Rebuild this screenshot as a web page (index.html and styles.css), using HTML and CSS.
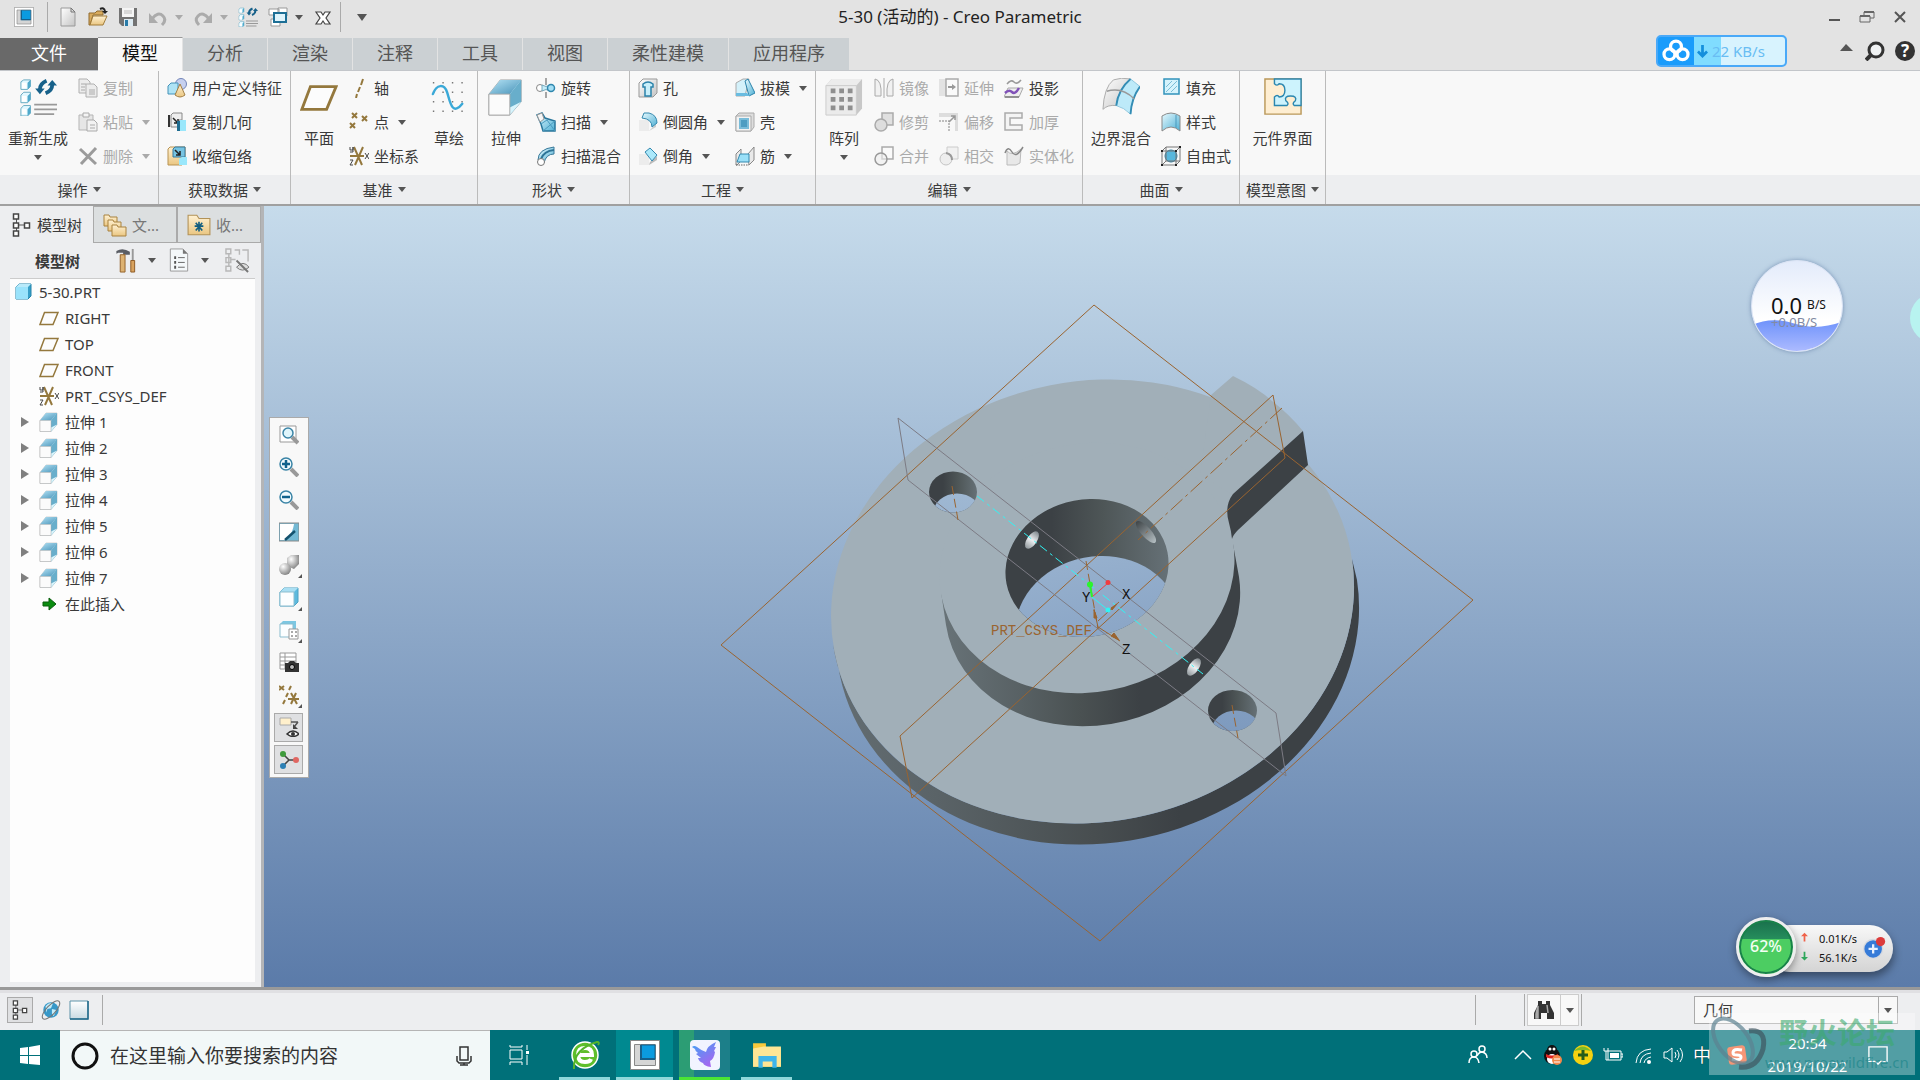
FILE: index.html
```html
<!DOCTYPE html>
<html lang="zh-CN">
<head>
    <meta charset="UTF-8">
    <meta name="viewport" content="width=device-width, initial-scale=1.0">
    <title>5-30 (活动的) - Creo Parametric</title>
    <link rel="stylesheet" href="styles.css">
</head>
<body>
    <!-- icon sprite -->
    <svg class="sprite" aria-hidden="true">
        <defs>
            <linearGradient id="g-blue" x1="0" y1="0" x2="1" y2="1"><stop offset="0" stop-color="#e8faff"/><stop offset="1" stop-color="#4fb0d4"/></linearGradient>
            <linearGradient id="g-deep" x1="0" y1="0" x2="1" y2="1"><stop offset="0" stop-color="#b5e3f5"/><stop offset="1" stop-color="#4792b8"/></linearGradient>
            <linearGradient id="g-grey" x1="0" y1="0" x2="1" y2="1"><stop offset="0" stop-color="#ffffff"/><stop offset="1" stop-color="#c4c4c4"/></linearGradient>
            <linearGradient id="g-page" x1="0" y1="0" x2="0" y2="1"><stop offset="0" stop-color="#ffffff"/><stop offset="1" stop-color="#c8dae2"/></linearGradient>
            <linearGradient id="g-tan" x1="0" y1="0" x2="0" y2="1"><stop offset="0" stop-color="#fff1d2"/><stop offset="1" stop-color="#eac681"/></linearGradient>
            <linearGradient id="g-bird" x1="0" y1="0" x2=".6" y2="1"><stop offset="0" stop-color="#3fa3f5"/><stop offset="1" stop-color="#a566f0"/></linearGradient>
            <radialGradient id="g-ball" cx=".35" cy=".3" r=".8"><stop offset="0" stop-color="#fff"/><stop offset="1" stop-color="#777"/></radialGradient>
        </defs>
        <symbol id="i-app" viewBox="0 0 30 30"><path d="M.5.5h29v29H.5z" fill="#fff" stroke="#888"/><path d="M4.500 4.500h21v21h-21z" fill="#d5d5d5" stroke="#888"/><path d="M11 5h14v14H11z" fill="#0b9be0" stroke="#15608c"/><path d="M11 5v14h14" fill="none" stroke="#15608c" stroke-width="2"/></symbol>
        <symbol id="i-new" viewBox="0 0 20 20"><path d="M3 1h10l4 4v14H3z" fill="url(#g-grey)" stroke="#999"/><path d="M13 1v4h4z" fill="#ddd" stroke="#777"/></symbol>
        <symbol id="i-open" viewBox="0 0 20 20"><path d="M1 6h6l2-2h6v4H5L2 18H1z" fill="#d8ab5e" stroke="#8f6b2f"/><path d="M5 9h14l-4 9H2z" fill="url(#g-tan)" stroke="#a27c39"/><path d="M12 2q4-2 5 2" fill="none" stroke="#222" stroke-width="2"/><path d="M14 4h6l-3 3z" fill="#222"/></symbol>
        <symbol id="i-save" viewBox="0 0 20 20"><path d="M1 1h18v18H4l-3-3z" fill="#737373"/><path d="M4 1h12v9H4z" fill="#f5f5f5"/><path d="M6 12h9v7H6z" fill="#ddeaf1"/><path d="M7 13h3v6H7z" fill="#297ba8"/><path d="M6 4h8M6 6h8" stroke="#bbb"/></symbol>
        <symbol id="i-undo" viewBox="0 0 20 20"><path d="M4 12q6-8 11-3 4 4-1 9" fill="none" stroke="#ababab" stroke-width="3"/><path d="M1 6v10h9z" fill="#ababab"/></symbol>
        <symbol id="i-redo" viewBox="0 0 20 20"><path d="M16 12q-6-8-11-3-4 4 1 9" fill="none" stroke="#ababab" stroke-width="3"/><path d="M19 6v10h-9z" fill="#ababab"/></symbol>
        <symbol id="i-regen" viewBox="0 0 40 40">
            <g fill="#e3f8ff" stroke="#66a9c0"><path d="M2 4l3-2h7v7l-3 3H2z"/><path d="M2 18l3-3h7v8l-3 3H2z"/><path d="M2 32l3-3h7v8l-3 3H2z"/></g>
            <g fill="#fff"><path d="M3 5h5v6H3zM3 19h5v6H3zM3 33h5v5H3z"/></g>
            <path d="M9 5l3-3v7l-3 3zM9 19l3-3v7l-3 3zM9 33l3-3v7l-3 3z" fill="#4fa9cb"/>
            <path d="M16 28h24M16 33h24M16 38h21" stroke="#999" stroke-width="2"/>
            <path d="M22 12q0-6 7-9" fill="none" stroke="#17618a" stroke-width="4"/><path d="M17 11h10l-5 6z" fill="#17618a"/><path d="M35 7q0 6-7 9" fill="none" stroke="#17618a" stroke-width="4"/><path d="M30 8h10l-5-6z" fill="#17618a"/>
        </symbol>
        <symbol id="i-wins" viewBox="0 0 20 20"><g fill="#fff" stroke="#999"><path d="M1 2h10v6H1zM10 1h9v8h-9zM3 12h9v7H3z"/></g><path d="M6 6h12v9H6z" fill="#dff4fc" stroke="#1d6f96" stroke-width="2"/></symbol>
        <symbol id="i-closewin" viewBox="0 0 20 20"><path d="M4 5h4l2 3 2-3h5l-4 6 4 6h-5l-2-3-2 3H3l4-6-4-6z" fill="#fff" stroke="#444" stroke-width="1.200"/></symbol>
        <symbol id="i-copy" viewBox="0 0 20 20"><g fill="#ececec" stroke="#b0b0b0"><path d="M1 1h8l3 3v11H1z"/><path d="M8 6h8l3 3v10H8z"/></g><path d="M3 6h5M3 9h4M3 12h4M11 12h6M11 14h6M11 16h6" stroke="#aaa"/></symbol>
        <symbol id="i-paste" viewBox="0 0 20 20"><path d="M1 3h14v15H1z" fill="#e6e6e6" stroke="#b5b5b5"/><path d="M5 1h6v4H5z" fill="#f4f4f4" stroke="#aaa"/><path d="M9 8h7l3 3v8H9z" fill="#f2f2f2" stroke="#aaa"/><path d="M12 13h5M12 16h5" stroke="#aaa"/></symbol>
        <symbol id="i-del" viewBox="0 0 20 20"><path d="M2 3l16 15M18 2L3 18" stroke="#9b9b9b" stroke-width="3"/></symbol>
        <symbol id="i-udf" viewBox="0 0 20 20"><circle cx="14" cy="6" r="5.500" fill="#c6d0ef" stroke="#7284b8"/><path d="M1 8l3-3h7v8l-3 3H1z" fill="#aee3f5" stroke="#4492b8"/><path d="M13 6l5 11q-5 4-10 0z" fill="url(#g-tan)" stroke="#a27f45"/></symbol>
        <symbol id="i-copygeom" viewBox="0 0 20 20"><path d="M1 3h2v12H1z" fill="#333"/><path d="M4 3l2-2h9v7h-3v7H4z" fill="#eee" stroke="#888"/><path d="M6 6l5 5m0-4v4H7" fill="none" stroke="#222" stroke-width="1.500"/><path d="M10 9h3v10h-3z" fill="#1e6c90"/><path d="M13 8h6v11h-6z" fill="#9ae7fb"/></symbol>
        <symbol id="i-shrink" viewBox="0 0 20 20"><path d="M1 3l2-2h15v13l-3 5H1z" fill="url(#g-tan)" stroke="#b89352"/><path d="M6 3l2-2h10v10H6z" fill="#76c4e2" stroke="#39799a"/><path d="M8 4l5 5m0-4v4H9" fill="none" stroke="#222" stroke-width="1.500"/><path d="M12 13l3-2h5v8h-8z" fill="#9ae7fb"/></symbol>
        <symbol id="i-plane" viewBox="0 0 40 40"><path d="M11 9h27L28 33H2z" fill="#fcfcfc" stroke="#94783d" stroke-width="3"/></symbol>
        <symbol id="i-axis" viewBox="0 0 20 20"><path d="M14 1l-2 6M11 9l-2 5M8 16l-1 4" stroke="#94783d" stroke-width="2"/></symbol>
        <symbol id="i-points" viewBox="0 0 20 20"><path d="M3 1l5 5m0-5L3 6M13 4l5 5m0-5l-5 5M1 11l5 5m0-5l-5 5" stroke="#94783d" stroke-width="2"/></symbol>
        <symbol id="i-csys" viewBox="0 0 20 20"><path d="M5 1l8 18M14 1L6 19M1 10h14" stroke="#94783d" stroke-width="2" fill="none"/><path d="M1 1v3h3V1v5H1M1 14h3l-3 5h3M16 7l4 6m0-6l-4 6" fill="none" stroke="#444"/></symbol>
        <symbol id="i-sketch" viewBox="0 0 40 40"><g stroke="#777" stroke-width="1.500" stroke-dasharray="1.500 8.500"><path d="M3 5h34M3 15h34M3 25h34M3 35h34"/></g><path d="M3 17C7 6 15 6 18 15s5 26 16 12" fill="none" stroke="#3aa9d8" stroke-width="2.500" stroke-linecap="round"/></symbol>
        <symbol id="i-extrude" viewBox="0 0 40 40"><path d="M2 17L14 2h22v23L24 39H2z" fill="#d8f4fc" stroke="#aaa"/><path d="M2 17L14 2h22L24 17z" fill="url(#g-deep)"/><path d="M24 17L36 2v23L24 39z" fill="#68aecb"/><path d="M24 31l12-6-12 14z" fill="#d8f4fc"/><path d="M2 17h22v22H2z" fill="#fbfbfb" stroke="#aaa"/></symbol>
        <symbol id="i-revolve" viewBox="0 0 20 20"><circle cx="4" cy="10" r="3.500" fill="#fff" stroke="#888"/><path d="M6 7q4 3 8 0v6q-4-3-8 0z" fill="#c6edf9" stroke="#77a9bc"/><circle cx="15" cy="10" r="3.500" fill="#a4dff5" stroke="#2f87ae" stroke-width="1.500"/><path d="M10 0v7m0 7v6" stroke="#555"/></symbol>
        <symbol id="i-sweep" viewBox="0 0 20 20"><path d="M1 3l5-2 3 5 10 3v10H7L5 12z" fill="url(#g-blue)" stroke="#29769b" stroke-width="1.500"/><path d="M5 12l6-4 8 11M7 19l12-10" stroke="#4a9bbf" fill="none"/><path d="M1 3l5-2 2 6-4 3z" fill="#f6f6f6" stroke="#999"/></symbol>
        <symbol id="i-sweptblend" viewBox="0 0 20 20"><path d="M2 14Q2 3 18 1v7q-8 0-10 9z" fill="url(#g-blue)" stroke="#39799a"/><path d="M5 13Q8 5 18 4" stroke="#2c7396" fill="none" stroke-width="2"/><circle cx="5" cy="16" r="3.500" fill="#fff" stroke="#777"/></symbol>
        <symbol id="i-hole" viewBox="0 0 20 20"><path d="M1 5l4-4h14v14l-4 4H1z" fill="url(#g-grey)" stroke="#999"/><path d="M5 6q5-4 10 0v3h-2v9H7V9H5z" fill="#c9effa" stroke="#2b83ab" stroke-width="1.500"/></symbol>
        <symbol id="i-round" viewBox="0 0 20 20"><path d="M1 8h10v11H1z" fill="#ececec"/><path d="M11 19l7-4v-3" fill="#ccc"/><path d="M6 1h5q8 2 8 10l-5 4Q14 7 4 6z" fill="url(#g-blue)" stroke="#3589af"/></symbol>
        <symbol id="i-chamfer" viewBox="0 0 20 20"><path d="M1 8h10v11H1z" fill="#ececec"/><path d="M11 19l8-5v-4l-7 6z" fill="#bbb"/><path d="M7 6l5-4 7 7-5 6z" fill="#abe8fa" stroke="#3589af"/></symbol>
        <symbol id="i-draft" viewBox="0 0 20 20"><path d="M1 5l7-4h6l-4 17H1z" fill="#d4f1fa" stroke="#aaa"/><path d="M10 3l3-2 7 14-6 3z" fill="url(#g-blue)" stroke="#2b83ab"/><path d="M1 15h11l3 3H1z" fill="#6abce0"/></symbol>
        <symbol id="i-shell" viewBox="0 0 20 20"><path d="M1 4l3-3h15v14l-3 4H1z" fill="#ddd" stroke="#aaa"/><path d="M1 4h15v15H1z" fill="#f2f2f2" stroke="#aaa"/><path d="M5 7h8v9H5z" fill="#4d9dc2" stroke="#79bcd9" stroke-width="2"/></symbol>
        <symbol id="i-rib" viewBox="0 0 20 20"><path d="M1 8l5-5v12l-4 4H1zM13 8l6-7v13l-5 5z" fill="#e9e9e9" stroke="#888"/><path d="M5 8h9v8H2z" fill="#9ae0f8" stroke="#3589af"/><path d="M1 19h13" stroke="#666" stroke-dasharray="1.500 1"/></symbol>
        <symbol id="i-pattern" viewBox="0 0 40 40"><path d="M1 8l6-7h32v31l-6 7H1z" fill="#c8c8c8"/><path d="M1 8l6-7h32l-6 7z" fill="#ececec"/><path d="M1 8h32v31H1z" fill="#ebebeb" stroke="#ccc"/><g fill="#8f8f8f"><path d="M6 11h5v5H6zM15 11h5v5h-5zM24 11h5v5h-5zM6 20h5v5H6zM15 20h5v5h-5zM24 20h5v5h-5zM6 29h5v5H6zM15 29h5v5h-5zM24 29h5v5h-5z"/></g></symbol>
        <symbol id="i-mirror" viewBox="0 0 20 20"><path d="M1 1q7 1 6 17H1zM19 1q-7 1-6 17h6z" fill="#f1f1f1" stroke="#aaa"/><path d="M10 0v20" stroke="#aaa"/></symbol>
        <symbol id="i-trim" viewBox="0 0 20 20"><path d="M8 1h11v12H8z" fill="#e0e0e0" stroke="#aaa" stroke-width="1.500"/><circle cx="7" cy="13" r="6" fill="#ddd" stroke="#aaa" stroke-width="1.500"/></symbol>
        <symbol id="i-merge" viewBox="0 0 20 20"><path d="M8 1h11v12H8z" fill="#fafafa" stroke="#aaa" stroke-width="1.500"/><circle cx="7" cy="13" r="6" fill="#eee" fill-opacity=".6" stroke="#999" stroke-width="1.500"/></symbol>
        <symbol id="i-extend" viewBox="0 0 20 20"><path d="M0 1h7v17H0z" fill="#e3e3e3"/><path d="M7 1h12v17H7z" fill="#fafafa" stroke="#aaa" stroke-width="1.500"/><path d="M9 9h5" stroke="#999" stroke-width="2"/><path d="M13 6l4 3-4 3z" fill="#999"/></symbol>
        <symbol id="i-offset" viewBox="0 0 20 20"><path d="M0 1h19v18h-3V5H0z" fill="#ddd"/><path d="M0 9h10v10" fill="none" stroke="#aaa" stroke-dasharray="2 1" stroke-width="1.500"/><path d="M10 10l6-6m-4 0h4v4" fill="none" stroke="#999" stroke-width="1.500"/></symbol>
        <symbol id="i-intersect" viewBox="0 0 20 20"><path d="M8 1h11v12H8z" fill="#f1f1f1" stroke="#ccc"/><circle cx="7" cy="13" r="6" fill="#eee" stroke="#c4c4c4"/><path d="M7 7q6 1 6 7" fill="none" stroke="#999" stroke-width="2"/></symbol>
        <symbol id="i-project" viewBox="0 0 20 20"><path d="M3 6q4-5 7-2t7-2" fill="none" stroke="#999" stroke-width="1.500"/><path d="M4 10h15l-4 9H0z" fill="#eee" stroke="#aaa"/><path d="M1 15q4-4 7-1t7-4" fill="none" stroke="#8152b8" stroke-width="2.500"/><path d="M1 19h14" stroke="#555"/></symbol>
        <symbol id="i-thicken" viewBox="0 0 20 20"><path d="M1 1h17v5H6v7h12v5H1z" fill="#f4f4f4" stroke="#aaa" stroke-width="1.500"/></symbol>
        <symbol id="i-solidify" viewBox="0 0 20 20"><path d="M3 5q5 6 14-2l-1 14-4 2H3z" fill="#e8e8e8" stroke="#bbb"/><path d="M1 7q3-8 7-1t11-5" fill="none" stroke="#888" stroke-width="1.500"/></symbol>
        <symbol id="i-boundary" viewBox="0 0 40 40"><path d="M1 33Q2 10 12 2q8-3 18-1Q17 12 15 29 6 28 1 33z" fill="url(#g-grey)" stroke="#aaa"/><path d="M30 1l10 8q-9 12-10 29-7-7-15-9Q17 12 30 1z" fill="#bdeaf9" stroke="#8cc6de"/><path d="M30 1Q17 12 15 29M40 9q-9 12-10 29" stroke="#348db5" stroke-width="2" fill="none"/><path d="M5 14q16-5 29 8" stroke="#999" stroke-width="1.500" fill="none"/></symbol>
        <symbol id="i-fill" viewBox="0 0 20 20"><path d="M3 1h15v15H3z" fill="#d5f3fc" stroke="#3193bb" stroke-width="1.500"/><path d="M5 9l6-6M5 14L16 3M10 14l6-6" stroke="#7abdd6"/></symbol>
        <symbol id="i-style" viewBox="0 0 20 20"><path d="M1 4q9-6 18 0v15q-9-8-18 0z" fill="url(#g-blue)" stroke="#8a8a8a"/><path d="M15 3v13" stroke="#4b99bd"/></symbol>
        <symbol id="i-freestyle" viewBox="0 0 20 20"><circle cx="10" cy="10" r="6" fill="#58b7dc" stroke="#2d7da1"/><path d="M1 5h14v14H1zM1 5l4-4h14v14l-4 4M15 5l4-4M5 1v14L1 19M5 15h14" fill="none" stroke="#777"/><path d="M0 4h2v2H0zM14 4h2v2h-2zM18 0h2v2h-2zM0 18h2v2H0zM14 18h2v2h-2z" fill="#222"/></symbol>
        <symbol id="i-puzzle" viewBox="0 0 40 40"><path d="M1 1h38v37H1z" fill="#feeed2" stroke="#b99758" stroke-width="1.500"/><path d="M11 1h28v28h-7q-3-2 1-5 2-5-5-5t-5 5q4 3 1 5H11v-9q3-3 5 0 6 0 6-7t-6-7q-2 3-5 0z" fill="#cdf3fd" stroke="#2b87b0" stroke-width="1.500"/></symbol>
        <symbol id="i-tree" viewBox="0 0 20 24"><path d="M5 6v12M7 12h7" stroke="#555"/><g fill="#fff" stroke="#444" stroke-width="1.500"><path d="M2 1h5v5H2zM2 10h5v5H2zM2 18h5v5H2zM13 10h5v5h-5z"/></g></symbol>
        <symbol id="i-folders" viewBox="0 0 24 24"><g fill="url(#g-tan)" stroke="#a8823f"><path d="M1 2h5l1 2h7v9H1z"/><path d="M5 7h5l1 2h7v9H5z"/><path d="M9 12h5l1 2h8v9H9z"/></g></symbol>
        <symbol id="i-fav" viewBox="0 0 22 20"><path d="M1 4V1h8l2 3h10v15H1z" fill="url(#g-tan)" stroke="#b29257"/><path d="M11 7v9M7 11h8M8 8l6 7m0-7l-6 7" stroke="#125e80" stroke-width="1.500"/></symbol>
        <symbol id="i-hammer" viewBox="0 0 22 26"><path d="M1 6V3q7-4 14 1v3H8V5H3z" fill="#5a5d64"/><path d="M5 7h5v18H5z" fill="#ddb272" stroke="#93622a"/><path d="M18 1v12" stroke="#999" stroke-width="2"/><path d="M16 13h4v12h-4z" fill="#d8a25e" stroke="#8d5a23"/></symbol>
        <symbol id="i-list" viewBox="0 0 20 26"><path d="M1 1h13l5 5v18H1z" fill="#f4f8fa" stroke="#999"/><path d="M14 1v5h5z" fill="#777"/><path d="M5 10h2M5 15h2M5 20h2" stroke="#555" stroke-width="3"/><path d="M9 10h7M9 15h7M9 20h7" stroke="#666"/></symbol>
        <symbol id="i-hide" viewBox="0 0 26 26"><g fill="none" stroke="#b8b8b8"><path d="M1 1h5v5H1zM1 10h5v5H1zM1 19h5v5H1zM4 6v13M6 12h5M10 2h5v5M18 2h6v12" stroke-width="1.500"/></g><path d="M12 20q7-8 13 0-7 6-13 0z" fill="#ddd" stroke="#777"/><path d="M12 13l12 12" stroke="#777" stroke-width="2"/></symbol>
        <symbol id="i-part" viewBox="0 0 18 18"><path d="M1 4l3-3h12v12l-3 3H1z" fill="#379fc7" stroke="#2484aa"/><path d="M1 4l3-3h12l-3 3z" fill="#b9eafa"/><path d="M1 4h12v12H1z" fill="#9ae3fb"/></symbol>
        <symbol id="i-insert" viewBox="0 0 20 20"><path d="M4 8h6V4l7 6-7 6v-4H4z" fill="#0b8c10" stroke="#0a5c0d"/></symbol>
        <symbol id="i-refit" viewBox="0 0 20 20"><path d="M1 1h16v16H1z" fill="#fff" stroke="#999"/><path d="M13 12l6 6" stroke="#999" stroke-width="4"/><circle cx="9" cy="8" r="5" fill="#dff5fb" stroke="#3a84a6" stroke-width="1.500"/></symbol>
        <symbol id="i-zoomin" viewBox="0 0 20 20"><path d="M12 12l7 7" stroke="#999" stroke-width="4"/><circle cx="7" cy="7" r="6" fill="#f2fbfe" stroke="#3a84a6" stroke-width="1.500"/><path d="M7 3v8M3 7h8" stroke="#11628c" stroke-width="2.500"/></symbol>
        <symbol id="i-zoomout" viewBox="0 0 20 20"><path d="M12 12l7 7" stroke="#999" stroke-width="4"/><circle cx="7" cy="7" r="6" fill="#f2fbfe" stroke="#3a84a6" stroke-width="1.500"/><path d="M3 7h8" stroke="#11628c" stroke-width="2.500"/></symbol>
        <symbol id="i-repaint" viewBox="0 0 20 20"><path d="M0 1h20v18H0z" fill="#73b9d4" stroke="#888"/><path d="M1 2h14q-1 9-8 16H1z" fill="#fff"/><path d="M6 18l10-9" stroke="#14526e" stroke-width="2.500"/></symbol>
        <symbol id="i-render" viewBox="0 0 20 20"><path d="M8 3l4-3h8v9l-5 5-7-3z" fill="url(#g-ball)"/><circle cx="6" cy="14" r="6" fill="url(#g-ball)"/></symbol>
        <symbol id="i-cube" viewBox="0 0 20 20"><path d="M1 5l4-4h14v14l-4 4H1z" fill="#5dbade" stroke="#4fa2c3"/><path d="M1 5l4-4h14l-4 4z" fill="#aadff3"/><path d="M1 5h14v14H1z" fill="#fcfeff" stroke="#8bbdcf"/></symbol>
        <symbol id="i-cubelist" viewBox="0 0 20 20"><path d="M1 4l3-3h13v13l-3 3H1z" fill="#7dc7e2"/><path d="M1 4h13v13H1z" fill="#fcfeff" stroke="#8bbdcf"/><path d="M10 9h9v10h-9z" fill="#fff" stroke="#999"/><path d="M12 12h2m2 0h2m-6 4h2m2 0h2" stroke="#555"/></symbol>
        <symbol id="i-camera" viewBox="0 0 20 20"><path d="M1 1h16v16H1zM1 5h16M6 1v16M1 9h16M1 13h16" fill="#fff" stroke="#999"/><path d="M6 11h3l2-2h4l2 2h3v9H6z" fill="#333"/><circle cx="13" cy="15" r="2.500" fill="#bbb" stroke="#000"/></symbol>
        <symbol id="i-datum" viewBox="0 0 20 20"><path d="M0 1l5 4m0-4L0 5M12 1l-2 4M9 8l-2 4M6 15l-2 4M12 8l6 11m-1-11l-5 11M9 14h11" stroke="#94783d" stroke-width="2"/></symbol>
        <symbol id="i-annot" viewBox="0 0 20 20"><path d="M1 1h11v7H1z" fill="#fff0cc" stroke="#aaa"/><path d="M12 5h7M19 5l-4 5" fill="none" stroke="#555" stroke-width="1.500"/><path d="M14 7v5h5z" fill="#444"/><path d="M8 17q6-6 12 0-6 5-12 0z" fill="#fff" stroke="#333" stroke-width="1.500"/><circle cx="14" cy="17" r="2" fill="#333"/></symbol>
        <symbol id="i-spin" viewBox="0 0 20 20"><path d="M4 4l6 6-6 6M10 10h7" fill="none" stroke="#444" stroke-width="1.500"/><circle cx="4" cy="4" r="3" fill="#3f9b3d"/><circle cx="17" cy="10" r="3" fill="#e06762"/><circle cx="4" cy="16" r="3" fill="#2c80b5"/></symbol>
        <symbol id="i-globe" viewBox="0 0 22 22"><circle cx="11" cy="11" r="8.500" fill="#3898c8"/><path d="M5 7q4-5 8-3l-2 5-4 1-1 4zM12 10l5 1-3 7-2-3z" fill="#c5ecf8"/><ellipse cx="11" cy="11" rx="13" ry="5" transform="rotate(-47 11 11)" fill="none" stroke="#777" stroke-width="1.200"/></symbol>
        <symbol id="i-page" viewBox="0 0 20 20"><path d="M1 1h18v18H1z" fill="url(#g-page)" stroke="#5d93a9"/><path d="M19 1v18H1" fill="none" stroke="#1f6a8b" stroke-width="1.500"/></symbol>
        <symbol id="i-binoc" viewBox="0 0 20 20"><path d="M4 1h4v3h4V1h4v4l4 8v6h-7v-6H7v6H0v-6l4-8z" fill="#333"/><path d="M4 6l-2 8v4h2zM13 5l1 8" stroke="#aaa" fill="#aaa" stroke-width="1.500"/></symbol>
    </svg>

    <header class="titlebar">
        <div class="quick-access">
            <button class="qa qa-app" aria-label="Creo"><svg><use href="#i-app"/></svg></button>
            <button class="qa" aria-label="新建"><svg><use href="#i-new"/></svg></button>
            <button class="qa" aria-label="打开"><svg><use href="#i-open"/></svg></button>
            <button class="qa" aria-label="保存"><svg><use href="#i-save"/></svg></button>
            <button class="qa off" aria-label="撤消"><svg><use href="#i-undo"/></svg><i class="arrow"></i></button>
            <button class="qa off" aria-label="重做"><svg><use href="#i-redo"/></svg><i class="arrow"></i></button>
            <button class="qa" aria-label="重新生成"><svg><use href="#i-regen"/></svg></button>
            <button class="qa" aria-label="窗口"><svg><use href="#i-wins"/></svg><i class="arrow"></i></button>
            <button class="qa" aria-label="关闭"><svg><use href="#i-closewin"/></svg></button>
            <button class="qa qa-more" aria-label="自定义"><i class="arrow"></i></button>
        </div>
        <h1>5-30 (活动的) - Creo Parametric</h1>
        <div class="window-controls">
            <button aria-label="最小化"><svg viewBox="0 0 16 16"><path d="M3 11h11" stroke="#555" stroke-width="2"/></svg></button>
            <button aria-label="还原"><svg viewBox="0 0 16 16"><path d="M5 6V3h10v6h-4M1 7h10v6H1z" fill="none" stroke="#666"/><path d="M5 3h10M1 7h10" stroke="#666" stroke-width="2"/></svg></button>
            <button aria-label="关闭窗口"><svg viewBox="0 0 16 16"><path d="M3 3l10 10M13 3L3 13" stroke="#555" stroke-width="2"/></svg></button>
        </div>
    </header>

    <nav class="tabs">
        <button class="tab file">文件</button>
        <button class="tab active">模型</button>
        <button class="tab">分析</button>
        <button class="tab">渲染</button>
        <button class="tab">注释</button>
        <button class="tab">工具</button>
        <button class="tab">视图</button>
        <button class="tab long">柔性建模</button>
        <button class="tab long">应用程序</button>
        <div class="help">
            <button aria-label="折叠"><svg viewBox="0 0 20 20"><path d="M5 10l6-7 7 7z" fill="#555"/></svg></button>
            <button aria-label="搜索"><svg viewBox="0 0 20 20"><path d="M1 19l6-6" stroke="#333" stroke-width="4"/><circle cx="11" cy="9" r="7" fill="#f0f2f3" stroke="#333" stroke-width="3"/></svg></button>
            <button class="q" aria-label="帮助">?</button>
        </div>
    </nav>

    <section class="ribbon">
        <div class="group">
            <div class="tools">
                <button class="big wide"><svg><use href="#i-regen"/></svg>重新生成<i class="arrow"></i></button>
                <div class="rows">
                    <button class="off"><svg><use href="#i-copy"/></svg>复制</button>
                    <button class="off"><svg><use href="#i-paste"/></svg>粘贴<i class="arrow"></i></button>
                    <button class="off"><svg><use href="#i-del"/></svg>删除<i class="arrow"></i></button>
                </div>
            </div>
            <button class="caption">操作<i class="arrow"></i></button>
        </div>
        <div class="group">
            <div class="tools">
                <div class="rows first">
                    <button><svg><use href="#i-udf"/></svg>用户定义特征</button>
                    <button><svg><use href="#i-copygeom"/></svg>复制几何</button>
                    <button><svg><use href="#i-shrink"/></svg>收缩包络</button>
                </div>
            </div>
            <button class="caption">获取数据<i class="arrow"></i></button>
        </div>
        <div class="group">
            <div class="tools">
                <button class="big"><svg><use href="#i-plane"/></svg>平面</button>
                <div class="rows">
                    <button><svg><use href="#i-axis"/></svg>轴</button>
                    <button><svg><use href="#i-points"/></svg>点<i class="arrow"></i></button>
                    <button><svg><use href="#i-csys"/></svg>坐标系</button>
                </div>
                <button class="big last"><svg><use href="#i-sketch"/></svg>草绘</button>
            </div>
            <button class="caption">基准<i class="arrow"></i></button>
        </div>
        <div class="group">
            <div class="tools">
                <button class="big"><svg><use href="#i-extrude"/></svg>拉伸</button>
                <div class="rows">
                    <button><svg><use href="#i-revolve"/></svg>旋转</button>
                    <button><svg><use href="#i-sweep"/></svg>扫描<i class="arrow"></i></button>
                    <button><svg><use href="#i-sweptblend"/></svg>扫描混合</button>
                </div>
            </div>
            <button class="caption">形状<i class="arrow"></i></button>
        </div>
        <div class="group">
            <div class="tools">
                <div class="rows first half">
                    <button><svg><use href="#i-hole"/></svg>孔</button>
                    <button><svg><use href="#i-round"/></svg>倒圆角<i class="arrow"></i></button>
                    <button><svg><use href="#i-chamfer"/></svg>倒角<i class="arrow"></i></button>
                </div>
                <div class="rows">
                    <button><svg><use href="#i-draft"/></svg>拔模<i class="arrow"></i></button>
                    <button><svg><use href="#i-shell"/></svg>壳</button>
                    <button><svg><use href="#i-rib"/></svg>筋<i class="arrow"></i></button>
                </div>
            </div>
            <button class="caption">工程<i class="arrow"></i></button>
        </div>
        <div class="group">
            <div class="tools">
                <button class="big"><svg><use href="#i-pattern"/></svg>阵列<i class="arrow"></i></button>
                <div class="rows even">
                    <button class="off"><svg><use href="#i-mirror"/></svg>镜像</button>
                    <button class="off"><svg><use href="#i-trim"/></svg>修剪</button>
                    <button class="off"><svg><use href="#i-merge"/></svg>合并</button>
                </div>
                <div class="rows even">
                    <button class="off"><svg><use href="#i-extend"/></svg>延伸</button>
                    <button class="off"><svg><use href="#i-offset"/></svg>偏移</button>
                    <button class="off"><svg><use href="#i-intersect"/></svg>相交</button>
                </div>
                <div class="rows">
                    <button><svg><use href="#i-project"/></svg>投影</button>
                    <button class="off"><svg><use href="#i-thicken"/></svg>加厚</button>
                    <button class="off"><svg><use href="#i-solidify"/></svg>实体化</button>
                </div>
            </div>
            <button class="caption">编辑<i class="arrow"></i></button>
        </div>
        <div class="group">
            <div class="tools">
                <button class="big wide"><svg><use href="#i-boundary"/></svg>边界混合</button>
                <div class="rows">
                    <button><svg><use href="#i-fill"/></svg>填充</button>
                    <button><svg><use href="#i-style"/></svg>样式</button>
                    <button><svg><use href="#i-freestyle"/></svg>自由式</button>
                </div>
            </div>
            <button class="caption">曲面<i class="arrow"></i></button>
        </div>
        <div class="group">
            <div class="tools">
                <button class="big full"><svg><use href="#i-puzzle"/></svg>元件界面</button>
            </div>
            <button class="caption">模型意图<i class="arrow"></i></button>
        </div>
        <div class="group rest">
            <div class="tools"></div>
            <div class="caption"></div>
        </div>
    </section>

    <main class="workspace">
        <aside class="navigator">
            <div class="nav-tabs">
                <button class="active"><svg class="i-tree"><use href="#i-tree"/></svg>模型树</button>
                <button><svg><use href="#i-folders"/></svg>文...</button>
                <button><svg><use href="#i-fav"/></svg>收...</button>
            </div>
            <div class="nav-tools">
                <h2>模型树</h2>
                <button aria-label="设置"><svg><use href="#i-hammer"/></svg><i class="arrow"></i></button>
                <button aria-label="显示"><svg><use href="#i-list"/></svg><i class="arrow"></i></button>
                <button class="hide" aria-label="隐藏"><svg><use href="#i-hide"/></svg></button>
            </div>
            <ul class="tree">
                <li class="root"><svg><use href="#i-part"/></svg>5-30.PRT</li>
                <li><svg><use href="#i-plane"/></svg>RIGHT</li>
                <li><svg><use href="#i-plane"/></svg>TOP</li>
                <li><svg><use href="#i-plane"/></svg>FRONT</li>
                <li><svg><use href="#i-csys"/></svg>PRT_CSYS_DEF</li>
                <li class="node"><svg><use href="#i-extrude"/></svg>拉伸 1</li>
                <li class="node"><svg><use href="#i-extrude"/></svg>拉伸 2</li>
                <li class="node"><svg><use href="#i-extrude"/></svg>拉伸 3</li>
                <li class="node"><svg><use href="#i-extrude"/></svg>拉伸 4</li>
                <li class="node"><svg><use href="#i-extrude"/></svg>拉伸 5</li>
                <li class="node"><svg><use href="#i-extrude"/></svg>拉伸 6</li>
                <li class="node"><svg><use href="#i-extrude"/></svg>拉伸 7</li>
                <li><svg><use href="#i-insert"/></svg>在此插入</li>
            </ul>
        </aside>

        <section class="canvas">
            <svg class="model" viewBox="264 206 1656 781">
                <defs>
                    <linearGradient id="m-bg" gradientUnits="userSpaceOnUse" x1="0" y1="206" x2="0" y2="987"><stop offset="0" stop-color="#c6dbeb"/><stop offset="1" stop-color="#5b7ba9"/></linearGradient>
                    <linearGradient id="m-rim" gradientUnits="userSpaceOnUse" x1="833" y1="0" x2="1180" y2="0"><stop offset="0" stop-color="#636d72"/><stop offset=".3" stop-color="#5a6367"/><stop offset=".75" stop-color="#484e50"/><stop offset="1" stop-color="#3c4145"/></linearGradient>
                    <linearGradient id="m-boss" gradientUnits="userSpaceOnUse" x1="941" y1="0" x2="1140" y2="0"><stop offset="0" stop-color="#687378"/><stop offset=".4" stop-color="#586164"/><stop offset=".7" stop-color="#4a5152"/><stop offset="1" stop-color="#3c4145"/></linearGradient>
                    <linearGradient id="m-bore"><stop offset=".3" stop-color="#3c4145"/><stop offset=".6" stop-color="#4e5657"/><stop offset="1" stop-color="#677278"/></linearGradient>
                    <linearGradient id="m-pin" x1="0" y1="0" x2="0" y2="1"><stop offset="0" stop-color="#7d858a"/><stop offset=".5" stop-color="#eef0f2"/><stop offset="1" stop-color="#8f979b"/></linearGradient>
                    <linearGradient id="m-pin-dark" x1="0" y1="0" x2="0" y2="1"><stop offset="0" stop-color="#3f4548"/><stop offset="1" stop-color="#b3bdc1"/></linearGradient>
                    <clipPath id="c-bore"><ellipse cx="1087" cy="568" rx="82" ry="68.500" transform="rotate(-11 1087 568)"/></clipPath>
                    <clipPath id="c-left"><ellipse cx="953" cy="492" rx="24" ry="20.500"/></clipPath>
                    <clipPath id="c-right"><ellipse cx="1232.500" cy="710.500" rx="24.500" ry="20.500"/></clipPath>
                </defs>

                <!-- base disc -->
                <path d="M833 644A262.900 220.300 -11 0 0 1352 559l5 21A262.900 220.300 -11 0 1 838 665z" fill="url(#m-rim)"/>
                <ellipse cx="1092.500" cy="601.500" rx="262.900" ry="220.300" transform="rotate(-11 1092.500 601.500)" fill="#a1afb8"/>

                <!-- boss and lever arm -->
                <path d="M941 592A148.300 124.300 -11 0 0 1233 544l6 33A148.300 124.300 -11 0 1 946 625z" fill="url(#m-boss)"/>
                <ellipse cx="1087" cy="568" rx="148.300" ry="124.300" transform="rotate(-11 1087 568)" fill="#a1afb8"/>
                <path d="M1211 395l22-19q25 12 39 25 17 13 31 30l-70 64-33-20z" fill="#a1afb8"/>
                <path d="M1303 431l5 34-70 65q-5 5-6 9-1-9-3-16-5-17 4-29z" fill="#3c4145"/>

                <!-- bores -->
                <g clip-path="url(#c-bore)">
                    <path d="M1000 490h172v160h-172z" fill="url(#m-bore)"/>
                    <ellipse cx="1097" cy="625" rx="82" ry="68.500" transform="rotate(-11 1097 625)" fill="url(#m-bg)"/>
                </g>
                <g clip-path="url(#c-left)">
                    <path d="M928 470h50v45h-50z" fill="url(#m-bore)"/>
                    <ellipse cx="957" cy="514" rx="24" ry="20.500" fill="url(#m-bg)"/>
                </g>
                <g clip-path="url(#c-right)">
                    <path d="M1207 688h51v45h-51z" fill="url(#m-bore)"/>
                    <ellipse cx="1236" cy="731" rx="24.500" ry="20.500" fill="url(#m-bg)"/>
                </g>
                <ellipse cx="1032" cy="540" rx="5" ry="10" transform="rotate(34 1032 540)" fill="url(#m-pin)"/>
                <ellipse cx="1194" cy="667" rx="5" ry="10" transform="rotate(34 1194 667)" fill="url(#m-pin)"/>
                <ellipse cx="1146" cy="532" rx="5" ry="14" transform="rotate(-42 1146 532)" fill="url(#m-pin-dark)"/>

                <!-- datum planes -->
                <g fill="none" stroke="#9a6430">
                    <path d="M1094 305l379 295-373 341-379-296z"/>
                    <path d="M1273 395l12 63-373 340-12-62z"/>
                    <path d="M898 418l10 62 378 296-10-63z" stroke="#7c7b84"/>
                    <path d="M1282 408l-144 132" stroke-dasharray="16 4 3 4"/>
                    <path d="M952 486l6 34M1232 705l6 33M1086 561l12 68" stroke-dasharray="9 4"/>
                    <path d="M977 496l226 178" stroke="#30f4f4" stroke-dasharray="9 4 3 4"/>
                </g>

                <!-- coordinate system -->
                <g stroke="#9a6430" fill="#9a6430">
                    <path d="M1098 627l-4-18M1098 627l22 14M1098 621l21-19" fill="none"/>
                    <path d="M1094 610l3 8h-3zM1119 640l-8-4 3-3zM1117 604l-5 6-1-2z"/>
                </g>
                <path d="M1092 597l16-14" stroke="#f23a3f"/><circle cx="1108" cy="582.500" r="2.500" fill="#f23a3f"/>
                <path d="M1092 597l-2-12" stroke="#2bf52b" stroke-width="2"/><circle cx="1090" cy="584.500" r="3" fill="#2bf52b"/>
                <path d="M1092 597l16 13" stroke="#30f4f4"/><circle cx="1108" cy="610" r="2.500" fill="#30f4f4"/>
                <text class="datum-label" x="991" y="635">PRT_CSYS_DEF</text>
                <g class="axis-label"><text x="1082" y="602">Y</text><text x="1122" y="599">X</text><text x="1122" y="654">Z</text></g>
            </svg>

            <div class="view-toolbar">
                <button aria-label="重新调整"><svg><use href="#i-refit"/></svg></button>
                <button aria-label="放大"><svg><use href="#i-zoomin"/></svg></button>
                <button aria-label="缩小"><svg><use href="#i-zoomout"/></svg></button>
                <button aria-label="重画"><svg><use href="#i-repaint"/></svg></button>
                <button class="more" aria-label="渲染选项"><svg><use href="#i-render"/></svg></button>
                <button class="more" aria-label="显示样式"><svg><use href="#i-cube"/></svg></button>
                <button class="more" aria-label="已保存方向"><svg><use href="#i-cubelist"/></svg></button>
                <button aria-label="视图管理器"><svg><use href="#i-camera"/></svg></button>
                <button class="more" aria-label="基准显示"><svg><use href="#i-datum"/></svg></button>
                <button class="on" aria-label="注释显示"><svg><use href="#i-annot"/></svg></button>
                <button class="on" aria-label="旋转中心"><svg><use href="#i-spin"/></svg></button>
            </div>

            <div class="speed-ball">
                <svg viewBox="0 0 92 92"><defs><linearGradient id="wave" x1="0" y1="0" x2="0" y2="1"><stop offset="0" stop-color="#6f93fb"/><stop offset="1" stop-color="#b0bdff"/></linearGradient></defs><path d="M0 64q20-9 44-1 22 7 48-3v32H0z" fill="url(#wave)"/></svg>
                <p><b>0.0</b><span>B/S</span></p>
                <small>+0.0B/S</small>
            </div>
            <div class="edge-ball"></div>

            <div class="net-meter">
                <div class="percent">62%</div>
                <dl>
                    <dt class="up"><svg viewBox="0 0 8 10"><path d="M4 0l4 4H5v6H3V4H0z" fill="#f0624a"/></svg></dt><dd>0.01K/s</dd>
                    <dt class="down"><svg viewBox="0 0 8 10"><path d="M4 10L0 6h3V0h2v6h3z" fill="#2fa85c"/></svg></dt><dd>56.1K/s</dd>
                </dl>
                <button aria-label="加速"><svg viewBox="0 0 26 26"><circle cx="11" cy="14" r="11" fill="#d6d9df"/><circle cx="11" cy="14" r="9.500" fill="#367bd8"/><path d="M11 9v10M6 14h10" stroke="#e8f1ff" stroke-width="2.500"/><circle cx="19" cy="6" r="5" fill="#dc3b3b"/></svg></button>
            </div>
        </section>
    </main>

    <footer class="status">
        <button class="on" aria-label="导航器"><svg class="i-tree"><use href="#i-tree"/></svg></button>
        <button aria-label="浏览器"><svg><use href="#i-globe"/></svg></button>
        <button aria-label="全屏"><svg><use href="#i-page"/></svg></button>
        <span class="sep"></span>
        <span class="fill"></span>
        <span class="sep"></span>
        <div class="find">
            <button aria-label="查找"><svg><use href="#i-binoc"/></svg></button>
            <button aria-label="查找选项"><i class="arrow"></i></button>
        </div>
        <div class="filter">
            <select aria-label="过滤器"><option>几何</option></select>
            <i class="arrow"></i>
        </div>
    </footer>

    <div class="taskbar">
        <button class="start" aria-label="开始"><svg viewBox="0 0 20 20"><path d="M0 3l8-1v8H0zM9 2l11-2v10H9zM0 11h8v8l-8-1zM9 11h11v9L9 19z" fill="#fff"/></svg></button>
        <label class="search">
            <svg viewBox="0 0 28 28"><circle cx="14" cy="14" r="12" fill="none" stroke="#111" stroke-width="3"/></svg>
            <input type="text" placeholder="在这里输入你要搜索的内容">
            <svg class="mic" viewBox="0 0 16 20"><path d="M4 1h8v13H4zM1 10v5l2 2h10l2-2v-5M8 17v2M4 19h8" fill="none" stroke="#333" stroke-width="1.500"/></svg>
        </label>
        <button class="taskview" aria-label="任务视图"><svg viewBox="0 0 22 20"><path d="M1 5h12v9H1zM1 0v2h12V0M1 20v-3h12v3M18 0v5M18 10v10" fill="none" stroke="#fff"/><path d="M17 6h3v3h-3z" fill="#fff"/></svg></button>
        <button class="app" aria-label="浏览器"><svg viewBox="0 0 30 30"><circle cx="15" cy="15" r="13" fill="#5fbe2b" stroke="#fff" stroke-width="1.500"/><path d="M8 15h14q0-7-7-7t-7 7 7 7q5 0 6-3" fill="none" stroke="#fff" stroke-width="4"/><path d="M4 29Q3 9 27 2q3 0 1 3" fill="none" stroke="#55b52a" stroke-width="2"/></svg></button>
        <button class="app current" aria-label="Creo Parametric"><svg><use href="#i-app"/></svg></button>
        <button class="app bird" aria-label="迅雷"><svg viewBox="0 0 30 30"><rect width="30" height="30" rx="4" fill="#f2f4ff"/><path d="M2 7q2-2 5 0 5 4 9 5 1-6 10-10l-2 5 2 0-2 4 1 1q-1 7-5 9l1 6q-7-1-8-4-4-1-5-5l3 0-5-4 2-1q-3-2-3-4z" fill="url(#g-bird)"/></svg></button>
        <button class="app" aria-label="文件资源管理器"><svg viewBox="0 0 28 26"><path d="M1 2h12v4h14v18H1z" fill="#f9c93c"/><path d="M1 7l10-2h16v19H1z" fill="#fee695"/><path d="M6 25v-11h17v11h-4v-6h-9v6z" fill="#3eb5ea"/></svg></button>
        <span class="fill"></span>
        <div class="tray">
            <svg viewBox="0 0 20 20"><g fill="none" stroke="#fff" stroke-width="1.500"><circle cx="6" cy="9" r="3"/><circle cx="14" cy="4" r="3"/><path d="M1 18q0-6 5-6 4 0 5 6M9 11q2-4 5-4 5 1 5 6"/></g></svg>
            <svg class="chev" viewBox="0 0 20 20"><path d="M2 14l8-8 8 8" fill="none" stroke="#fff" stroke-width="1.500"/></svg>
            <svg viewBox="0 0 20 20"><ellipse cx="9" cy="11" rx="8" ry="8" fill="#111"/><ellipse cx="9" cy="5" rx="5" ry="5" fill="#111"/><ellipse cx="9" cy="14" rx="5" ry="5" fill="#fff"/><path d="M3 9q6 3 12 0v3q-6 3-12 0z" fill="#e02320"/><circle cx="7" cy="4" r="1.500" fill="#fff"/><circle cx="11" cy="4" r="1.500" fill="#fff"/><circle cx="14" cy="15" r="5" fill="#f5884a"/><path d="M11 14h6M11 17h6" stroke="#fff"/></svg>
            <svg viewBox="0 0 20 20"><circle cx="10" cy="10" r="10" fill="#f6d211"/><path d="M1 6q9-9 17 0-8-2-17 0z" fill="#7cba2a"/><path d="M10 5v10M5 10h10" stroke="#255c1b" stroke-width="3"/></svg>
            <svg viewBox="0 0 20 20"><path d="M5 6h13v9H5zM18 9h2v3h-2M1 3v3h4V3M3 6v9h2" fill="none" stroke="#fff"/><path d="M7 8h9v5H7z" fill="#fff"/></svg>
            <svg viewBox="0 0 20 20"><g fill="none" stroke="#fff"><path d="M3 18Q4 5 18 4M7 18Q8 9 18 8M11 18q1-5 7-6"/></g><circle cx="16" cy="17" r="2" fill="#fff"/></svg>
            <svg viewBox="0 0 20 20"><path d="M1 7h3l5-4v14l-5-4H1zM12 7q2 3 0 6M14 5q4 5 0 10M17 3q5 7 0 14" fill="none" stroke="#fff"/></svg>
            <span class="ime">中</span>
            <svg class="sogou" viewBox="0 0 20 20"><rect x="1" y="1" width="18" height="18" rx="3" fill="#ef6535" transform="rotate(-8 10 10)"/><path d="M15 5Q6 3 6 8q0 2 4 2t4 2q0 4-9 2" fill="none" stroke="#fff" stroke-width="3"/></svg>
            <time>20:54<br>2019/10/22</time>
            <svg class="note" viewBox="0 0 22 22"><path d="M1 2h20v16h-7l-3 3-3-3H1z" fill="none" stroke="#fff" stroke-width="1.500"/></svg>
        </div>
    </div>

    <div class="disk-meter">
        <svg viewBox="0 0 26 22"><g fill="none" stroke="#fff" stroke-width="3"><circle cx="13" cy="7" r="5"/><circle cx="7" cy="14" r="5"/><circle cx="19" cy="14" r="5"/></g></svg>
        <p><svg class="down" viewBox="0 0 12 14"><path d="M6 0v12M1 7l5 5 5-5" fill="none" stroke="#148fdc" stroke-width="3"/></svg>22 KB/s</p>
    </div>

    <div class="watermark">
        <svg viewBox="0 0 60 60"><g fill="none"><ellipse cx="24" cy="28" rx="15" ry="26" transform="rotate(-38 24 28)" stroke="#5d8291" stroke-width="4"/><path d="M40 18q18-2 14 18-6 20-24 18" stroke="#3f5661" stroke-width="5"/></g></svg>
        <p>野火论坛<span>www.proewildfire.cn</span></p>
    </div>
</body>
</html>
```
FILE: styles.css
```css
* {
    margin: 0;
    padding: 0;
    box-sizing: border-box;
}

body {
    height: 100vh;
    display: flex;
    flex-direction: column;
    overflow: hidden;
    background-color: #edeef0;
    color: #3a3a3a;
    font-family: "Noto Sans", "Noto Sans CJK SC", sans-serif;
    font-size: 15px;
    line-height: 20px;
}

button,
input,
select {
    font: inherit;
    color: inherit;
    border: none;
    background: none;
    white-space: nowrap;
}

svg {
    flex: none;
    display: block;
}

.sprite {
    position: absolute;
    width: 0;
    height: 0;
}

.arrow {
    flex: none;
    border: 4px solid transparent;
    border-top: 5px solid #555;
    border-bottom: none;
}

.off {
    color: #aaa;
}

.off .arrow {
    border-top-color: #aaa;
}

.fill {
    flex: 1;
}

/* title bar */
.titlebar {
    display: grid;
    grid-template-columns: 1fr auto 1fr;
    height: 37px;
    background-color: #e3e3e3;
}

.titlebar h1 {
    font-size: 17px;
    font-weight: normal;
    line-height: 34px;
    color: #222;
}

.quick-access {
    display: flex;
    align-items: center;
    height: 34px;
    padding-left: 14px;
    gap: 10px;
}

.qa {
    display: flex;
    align-items: center;
    gap: 7px;
}

.qa svg {
    width: 20px;
    height: 20px;
}

.qa-app {
    height: 30px;
    padding-right: 13px;
    border-right: 1px solid #aaa;
}

.qa-more {
    height: 30px;
    margin-left: -3px;
    padding-left: 9px;
    border-left: 1px solid #aaa;
}

.qa-more .arrow {
    border-width: 7px 5px 0;
}

.qa-more::before {
    content: "";
}

.window-controls {
    display: flex;
    justify-content: flex-end;
    align-items: center;
    height: 34px;
    gap: 17px;
    padding-right: 12px;
}

.window-controls svg {
    width: 16px;
    height: 16px;
}

/* ribbon tabs */
.tabs {
    display: flex;
    height: 34px;
    background-color: #e3e3e3;
    border-bottom: 1px solid #c3c6ca;
}

.tab {
    width: 85px;
    margin-top: 1px;
    padding-bottom: 3px;
    font-size: 18px;
    color: #555;
    background-color: #cbd0d3;
    border-right: 1px solid #e3e3e3;
}

.tab.file {
    width: 98px;
    color: #fff;
    background-color: #696969;
    border: none;
}

.tab.active {
    margin: 0 0 -1px;
    color: #111;
    background-color: #f8f8f8;
    border-top: 1px solid #999;
}

.tab.long {
    width: 121px;
}

.help {
    display: flex;
    align-items: center;
    gap: 10px;
    margin-left: auto;
    padding: 0 5px 6px 0;
}

.help svg {
    width: 20px;
    height: 20px;
}

.help .q {
    width: 20px;
    height: 20px;
    border-radius: 50%;
    background-color: #333;
    color: #fff;
    font-size: 17px;
    font-weight: bold;
}

/* ribbon */
.ribbon {
    display: grid;
    grid-template-columns: 159px 132px 187px 152px 186px 267px 157px 86px 1fr;
    height: 135px;
    border-bottom: 2px solid #a0a0a0;
    background-color: #f8f8f8;
}

.group {
    display: flex;
    flex-direction: column;
    border-right: 1px solid #bbb;
}

.group.rest {
    border: none;
}

.tools {
    flex: 1;
    display: flex;
}

.caption {
    display: flex;
    justify-content: center;
    align-items: center;
    gap: 5px;
    height: 29px;
    background-color: #edeef0;
}

.big {
    display: flex;
    flex-direction: column;
    align-items: center;
    width: 56px;
    padding-top: 7px;
}

.big svg {
    width: 38px;
    height: 38px;
    margin-bottom: 12px;
}

.big .arrow {
    margin-top: 7px;
}

.big.wide {
    width: 76px;
}

.big.full {
    width: 85px;
}

.big.last {
    margin-left: auto;
}

.rows {
    display: flex;
    flex-direction: column;
    padding-left: 2px;
}

.rows.first {
    padding-left: 8px;
}

.rows.half {
    width: 103px;
}

.rows.even {
    width: 65px;
}

.rows button {
    display: flex;
    align-items: center;
    gap: 5px;
    height: 34px;
}

.rows svg {
    width: 20px;
    height: 20px;
}

.rows .arrow {
    margin-left: 4px;
}

/* work area */
.workspace {
    flex: 1;
    display: flex;
    min-height: 0;
}

.navigator {
    display: flex;
    flex-direction: column;
    width: 264px;
    padding-bottom: 5px;
    border-right: 3px solid #b4b5b7;
}

.nav-tabs {
    display: grid;
    grid-template-columns: 93px 84px 84px;
    height: 37px;
}

.nav-tabs button {
    display: flex;
    align-items: center;
    gap: 5px;
    padding-left: 9px;
    background-color: #dcdfe0;
    border: 1px solid #aaa;
    color: #777;
}

.nav-tabs .active {
    padding-left: 11px;
    background: none;
    border: none;
    color: #3a3a3a;
}

.nav-tabs svg {
    width: 24px;
    height: 24px;
}

.nav-tabs .i-tree {
    width: 21px;
}

.nav-tools {
    display: flex;
    align-items: center;
    height: 35px;
    padding-left: 35px;
    gap: 12px;
}

.nav-tools h2 {
    margin-right: 23px;
    font-size: 15px;
    font-weight: bold;
}

.nav-tools button {
    display: flex;
    align-items: center;
    gap: 11px;
}

.nav-tools svg {
    width: 22px;
    height: 25px;
}

.nav-tools .hide {
    margin-left: 4px;
}

.nav-tools .hide svg {
    width: 25px;
}

.tree {
    flex: 1;
    margin: 0 6px 0 10px;
    border-top: 1px solid #ccc;
    background-color: #fdfdfd;
    list-style: none;
}

.tree li {
    display: flex;
    align-items: center;
    gap: 6px;
    height: 26px;
    padding-left: 29px;
}

.tree .root {
    padding-left: 5px;
}

.tree .node {
    padding-left: 11px;
}

.tree .node::before {
    content: "";
    margin-right: 4px;
    border: 5px solid transparent;
    border-left: 8px solid #808080;
    border-right: none;
}

.tree svg {
    width: 20px;
    height: 20px;
}

.tree .root svg {
    width: 18px;
    height: 18px;
}

.canvas {
    position: relative;
    flex: 1;
    min-width: 0;
    overflow: hidden;
    background: linear-gradient(#c6dbeb, #5b7ba9);
}

.model {
    width: 100%;
    height: 100%;
}

.datum-label {
    font: 14px "Liberation Mono", monospace;
    fill: #9a6430;
}

.axis-label {
    font: 14px "Liberation Mono", monospace;
    fill: #111;
}

/* floating view toolbar */
.view-toolbar {
    position: absolute;
    left: 5px;
    top: 211px;
    display: flex;
    flex-direction: column;
    align-items: center;
    justify-content: space-between;
    width: 40px;
    height: 361px;
    padding: 2px 1px 3px 0;
    background-color: #f8f8f8;
    border: 1px solid #aaa;
}

.view-toolbar button {
    position: relative;
    display: flex;
    align-items: center;
    justify-content: center;
    width: 29px;
    height: 29px;
}

.view-toolbar svg {
    width: 20px;
    height: 20px;
}

.view-toolbar .on,
.status .on {
    background-color: #dfe0e2;
    border: 1px solid #aaa;
}

.view-toolbar .more::after {
    content: "";
    position: absolute;
    right: 1px;
    bottom: 1px;
    border: 2px solid #555;
    border-top-color: transparent;
    border-left-color: transparent;
}

/* desktop widgets over the canvas */
.speed-ball {
    position: absolute;
    right: 77px;
    top: 54px;
    width: 92px;
    height: 92px;
    border: 1px solid #dce4f5;
    border-radius: 50%;
    overflow: hidden;
    background: linear-gradient(#e3ebfb, #fff 65%);
    box-shadow: 0 0 4px rgba(60, 90, 140, 0.5);
}

.speed-ball svg {
    position: absolute;
    width: 92px;
    height: 92px;
}

.speed-ball p {
    position: relative;
    display: flex;
    align-items: center;
    gap: 5px;
    padding: 32px 0 0 19px;
    font-size: 12px;
    line-height: 24px;
    color: #111;
}

.speed-ball b {
    font-size: 22px;
    font-weight: normal;
}

.speed-ball small {
    position: relative;
    display: block;
    margin-top: -3px;
    padding-left: 19px;
    font-size: 13px;
    line-height: 16px;
    color: #828aa3;
}

.edge-ball {
    position: absolute;
    right: -40px;
    top: 87px;
    width: 50px;
    height: 50px;
    border-radius: 50%;
    background-color: #b8f3f0;
}

.net-meter {
    position: absolute;
    right: 27px;
    top: 719px;
    display: flex;
    align-items: center;
    gap: 6px;
    width: 127px;
    height: 47px;
    padding: 0 0 2px 35px;
    border-radius: 24px;
    background: linear-gradient(#f8f8f8, #d4d4d4);
    box-shadow: 1px 5px 9px rgba(0, 0, 0, 0.4);
}

.net-meter .percent {
    position: absolute;
    left: -30px;
    top: -8px;
    width: 60px;
    height: 60px;
    border: 3px solid #eee;
    border-radius: 50%;
    background: linear-gradient(#196f4c 0, #268d5c 35%, #4ccd62 36%);
    box-shadow: inset 0 0 0 2px #19814a, 0 3px 8px rgba(0, 0, 0, 0.4);
    font-size: 16px;
    font-weight: 500;
    line-height: 52px;
    text-align: center;
    color: #f3fff3;
}

.net-meter dl {
    display: grid;
    grid-template-columns: 18px auto;
    font-size: 11px;
    line-height: 19px;
    color: #111;
}

.net-meter dt svg {
    width: 7px;
    height: 16px;
}

.net-meter button svg {
    width: 24px;
    height: 24px;
}

.disk-meter {
    position: absolute;
    right: 133px;
    top: 35px;
    display: flex;
    width: 131px;
    height: 32px;
    border: 2px solid #4aa9f8;
    border-radius: 5px;
    overflow: hidden;
    background-color: #1a9cfb;
}

.disk-meter svg {
    width: 36px;
    height: 24px;
    margin-top: 2px;
}

.disk-meter p {
    flex: 1;
    display: flex;
    align-items: center;
    gap: 4px;
    padding-left: 3px;
    background: linear-gradient(90deg, #80dcff 30%, #d8f3fe 30%);
    color: #69bdf3;
}

.disk-meter .down {
    width: 11px;
    height: 13px;
    margin: 0;
}

/* status bar */
.status {
    display: flex;
    align-items: center;
    height: 43px;
    padding: 0 22px 0 7px;
    gap: 8px;
    border-top: 3px solid #999;
    box-shadow: inset 0 3px #e0e0e3;
}

.status button {
    display: flex;
    align-items: center;
    justify-content: center;
}

.status svg {
    width: 20px;
    height: 20px;
}

.status .on {
    width: 26px;
    height: 26px;
}

.status .sep {
    width: 1px;
    height: 30px;
    margin-left: 5px;
    background-color: #aaa;
}

.find {
    display: flex;
    height: 32px;
    margin-left: 40px;
    padding: 0 2px;
    border: solid #aaa;
    border-width: 0 1px;
}

.find button {
    width: 34px;
    border: 1px solid #ccc;
    background-color: #f8f8f8;
}

.find button + button {
    width: 18px;
    border-left: none;
}

.filter {
    position: relative;
    margin-left: 104px;
}

.filter select {
    appearance: none;
    width: 204px;
    height: 28px;
    padding-left: 8px;
    border: 1px solid #aaa;
    background: linear-gradient(#aaa, #aaa) right 18px top / 1px 100% no-repeat #f8f8f8;
}

.filter .arrow {
    position: absolute;
    right: 6px;
    top: 12px;
}

/* windows taskbar */
.taskbar {
    display: flex;
    height: 50px;
    background-color: #007079;
    color: #fff;
}

.start {
    display: flex;
    align-items: center;
    justify-content: center;
    width: 60px;
}

.start svg {
    width: 20px;
    height: 20px;
}

.search {
    display: flex;
    align-items: center;
    width: 430px;
    padding: 0 18px 0 11px;
    gap: 11px;
    border-top: 1px solid #b5b5b5;
    background-color: #f2f8f8;
}

.search svg {
    width: 28px;
    height: 28px;
}

.search .mic {
    width: 16px;
    height: 20px;
}

.search input {
    flex: 1;
    min-width: 0;
    font-size: 19px;
    line-height: 28px;
}

.search input::placeholder {
    color: #333;
}

.taskview {
    width: 60px;
    margin-right: 9px;
    padding-left: 19px;
}

.taskview svg {
    width: 22px;
    height: 20px;
}

.app {
    display: flex;
    align-items: center;
    justify-content: center;
    width: 51px;
    margin-right: 11px;
    padding-top: 3px;
    border-bottom: 3px solid #8fd8da;
}

.app svg {
    width: 30px;
    height: 30px;
}

.app.current {
    width: 57px;
    margin: 0 10px 0 -5px;
    background-color: #008990;
}

.app.bird {
    margin-left: -4px;
    border-color: #4be535;
    background: linear-gradient(90deg, #2c9d74 29%, #1c7f89 29%);
}

.tray {
    display: flex;
    align-items: center;
    gap: 10px;
    padding-right: 32px;
}

.tray svg {
    width: 20px;
    height: 20px;
}

.tray .chev {
    margin-left: 15px;
}

.tray .ime {
    width: 18px;
    font-size: 18px;
    text-shadow: 0 0 1px #000;
}

.tray .sogou {
    margin-left: 6px;
}

.tray time {
    width: 101px;
    line-height: 23px;
    text-align: center;
}

.watermark {
    position: absolute;
    right: 5px;
    bottom: 5px;
    display: flex;
    width: 206px;
    height: 62px;
    background-color: rgba(255, 255, 255, 0.32);
}

.watermark svg {
    width: 60px;
    height: 60px;
    opacity: 0.7;
}

.watermark p {
    padding-left: 10px;
    font-size: 29px;
    font-weight: bold;
    line-height: 40px;
    white-space: nowrap;
    color: rgba(60, 170, 110, 0.6);
}

.watermark span {
    display: block;
    margin-left: -14px;
    font-size: 15px;
    font-weight: normal;
    line-height: 18px;
    color: rgba(20, 130, 135, 0.6);
}
```
